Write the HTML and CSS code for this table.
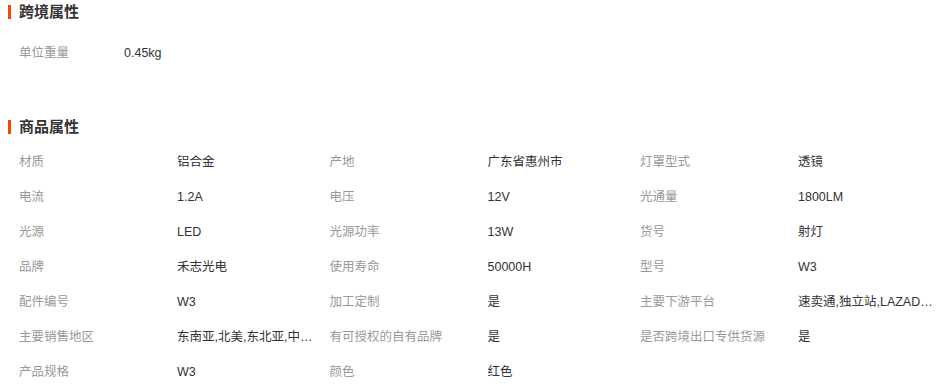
FILE: index.html
```html
<!DOCTYPE html>
<html lang="zh-CN">
<head>
<meta charset="utf-8">
<title>属性</title>
<link rel="stylesheet" href="styles.css">
</head>
<body>
<div class="page">
  <section class="block">
    <h2 class="block-title">跨境属性</h2>
    <div class="kv-single">
      <span class="label narrow">单位重量</span>
      <span class="value">0.45kg</span>
    </div>
  </section>
  <section class="block block-goods">
    <h2 class="block-title">商品属性</h2>
    <div class="attr-grid">
      <span class="label">材质</span><span class="value">铝合金</span>
      <span class="label">产地</span><span class="value">广东省惠州市</span>
      <span class="label">灯罩型式</span><span class="value">透镜</span>

      <span class="label">电流</span><span class="value">1.2A</span>
      <span class="label">电压</span><span class="value">12V</span>
      <span class="label">光通量</span><span class="value">1800LM</span>

      <span class="label">光源</span><span class="value">LED</span>
      <span class="label">光源功率</span><span class="value">13W</span>
      <span class="label">货号</span><span class="value">射灯</span>

      <span class="label">品牌</span><span class="value">禾志光电</span>
      <span class="label">使用寿命</span><span class="value">50000H</span>
      <span class="label">型号</span><span class="value">W3</span>

      <span class="label">配件编号</span><span class="value">W3</span>
      <span class="label">加工定制</span><span class="value">是</span>
      <span class="label">主要下游平台</span><span class="value">速卖通,独立站,LAZADA,SHOPEE</span>

      <span class="label">主要销售地区</span><span class="value">东南亚,北美,东北亚,中东,欧洲</span>
      <span class="label">有可授权的自有品牌</span><span class="value">是</span>
      <span class="label">是否跨境出口专供货源</span><span class="value">是</span>

      <span class="label">产品规格</span><span class="value">W3</span>
      <span class="label">颜色</span><span class="value">红色</span>
    </div>
  </section>
</div>
</body>
</html>
```

FILE: styles.css
```css
html, body {
  margin: 0;
  padding: 0;
  background: #fff;
  overflow: hidden;
}

.page {
  width: 936px;
  font-family: "Liberation Sans", "Noto Sans CJK SC", sans-serif;
  font-size: 12.5px;
  color: #333;
}

.block-title {
  display: flex;
  align-items: center;
  gap: 8px;
  margin: 0;
  padding-left: 8px;
  height: 24px;
  line-height: 24px;
  font-size: 15px;
  font-weight: bold;
  color: #333;
}

.block-title::before {
  content: "";
  display: block;
  width: 3px;
  height: 14px;
  background: #ff4400;
}

.kv-single {
  display: flex;
  margin-top: 12px;
  padding-left: 19px;
  height: 35px;
  line-height: 35px;
}

.block-goods {
  margin-top: 44px;
}

.attr-grid {
  display: grid;
  grid-template-columns: repeat(3, 158px 152.5px);
  grid-auto-rows: 35px;
  margin-top: 5.5px;
  padding-left: 19px;
  line-height: 35px;
}

.label {
  color: #999;
  white-space: nowrap;
}

.label.narrow {
  width: 105px;
}

.value {
  color: #333;
  white-space: nowrap;
  overflow: hidden;
  text-overflow: ellipsis;
  padding-right: 13.5px;
}
```
